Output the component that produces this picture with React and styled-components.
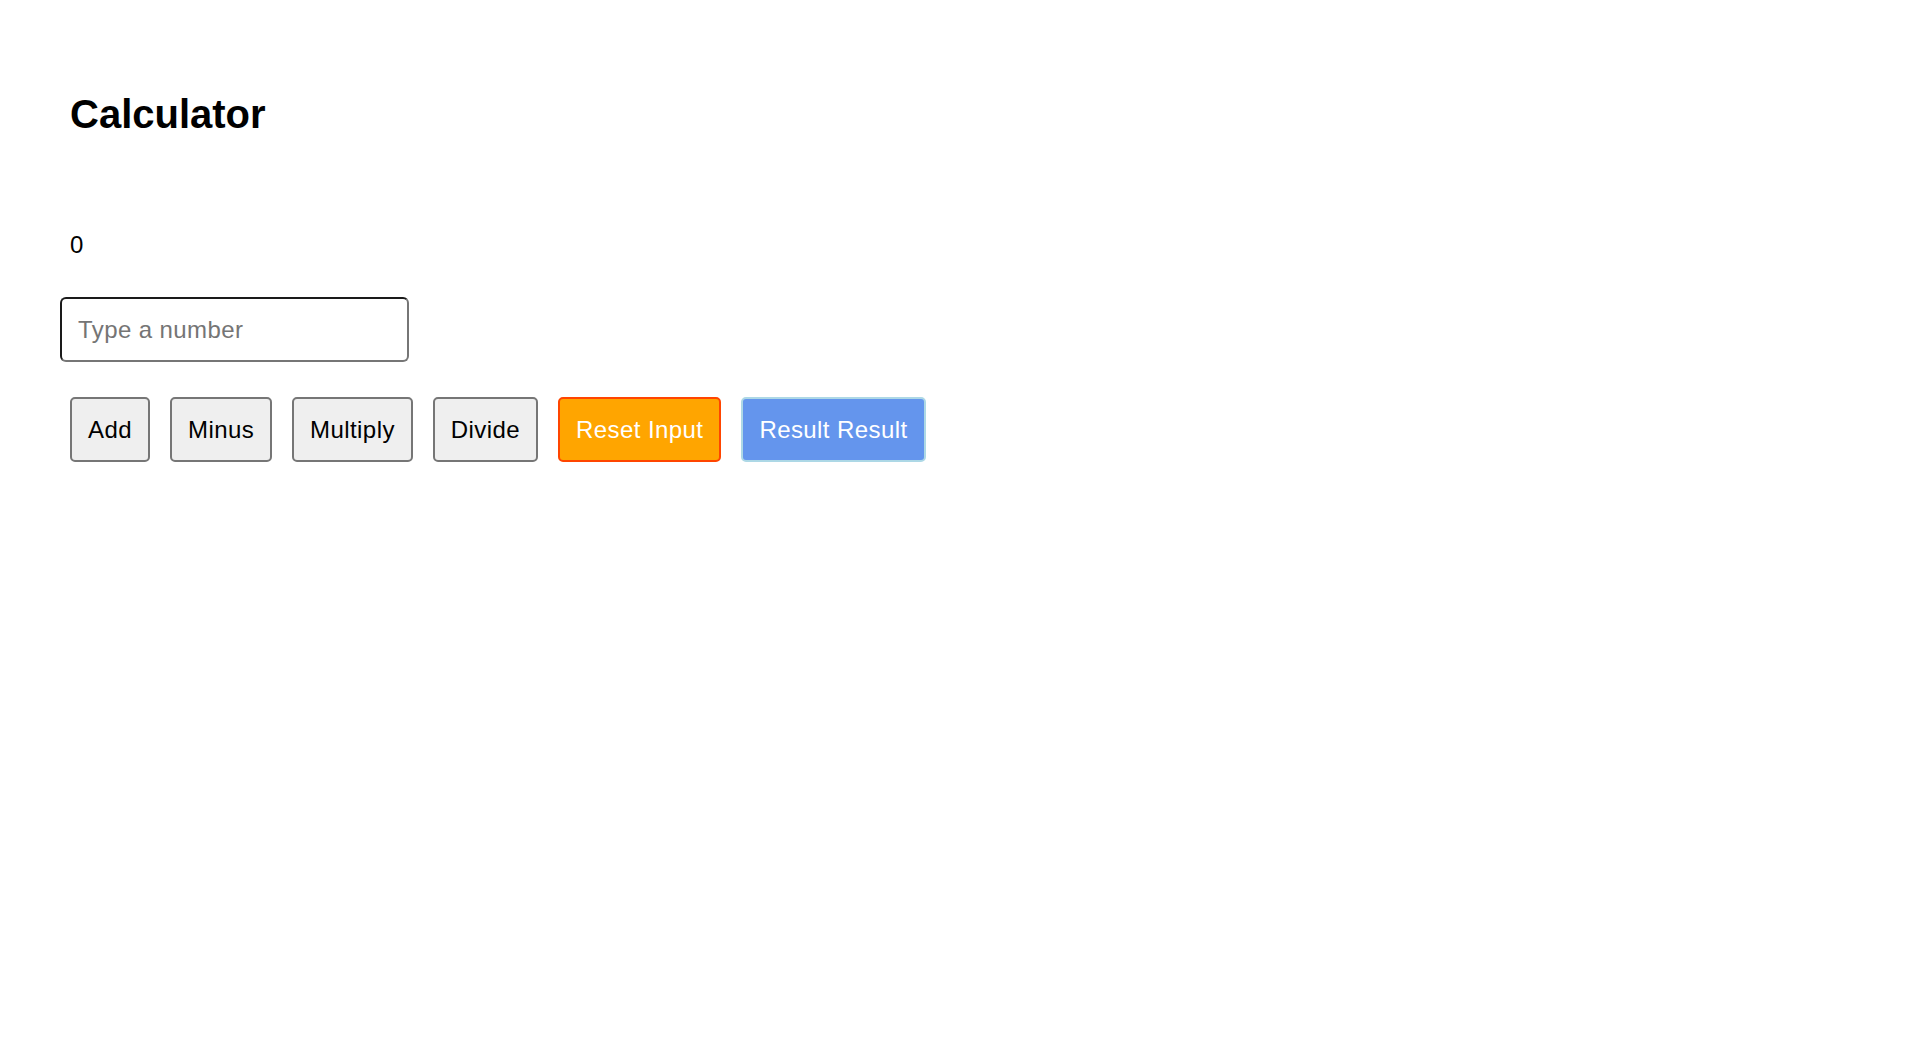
import styled, { createGlobalStyle } from 'styled-components';

const GlobalStyle = createGlobalStyle`
  html, body {
    margin: 0;
    padding: 0;
    background: #fff;
  }

  body {
    font-family: "Liberation Sans", Arial, sans-serif;
    color: #000;
  }
`;

const CalculatorPage = styled.main`
  display: flex;
  flex-direction: column;
  align-items: flex-start;
  padding: 91px 0 0 60px;
`;

const Title = styled.h1`
  margin: 0 0 0 10px;
  font-size: 40px;
  line-height: 46px;
  font-weight: 700;
`;

const ResultValue = styled.p`
  margin: 94px 0 0 10px;
  font-size: 24px;
  line-height: 28px;
`;

const NumberInput = styled.input`
  margin-top: 38px;
  width: 313px;
  height: 29px;
  padding: 16px;
  font-family: "Liberation Sans", Arial, sans-serif;
  font-size: 24px;
  letter-spacing: 0.4px;
  color: #000;
  background: #fff;
  border: 2px solid #767676;
  border-top-color: #1a1a1a;
  border-left-color: #1a1a1a;
  border-radius: 6px;
  outline: none;

  &::placeholder {
    color: #757575;
  }
`;

const ButtonRow = styled.div`
  display: flex;
  gap: 20px;
  margin: 35px 0 0 10px;
`;

const variants = {
  default: { bg: '#efefef', border: '#767676', color: '#000' },
  reset: { bg: '#ffa500', border: '#ff4500', color: '#fff' },
  result: { bg: '#6495ed', border: '#add8e6', color: '#fff' },
};

const CalcButton = styled.button`
  height: 65px;
  padding: 0 16px;
  font-family: "Liberation Sans", Arial, sans-serif;
  font-size: 24px;
  line-height: 29px;
  letter-spacing: 0.42px;
  color: ${({ $variant }) => variants[$variant].color};
  background: ${({ $variant }) => variants[$variant].bg};
  border: 2px solid ${({ $variant }) => variants[$variant].border};
  border-radius: 5px;
  cursor: pointer;
`;

const operations = ['Add', 'Minus', 'Multiply', 'Divide'];

export default function App() {
  return (
    <>
      <GlobalStyle />
      <CalculatorPage>
        <Title>Calculator</Title>
        <ResultValue>0</ResultValue>
        <NumberInput type="number" placeholder="Type a number" />
        <ButtonRow>
          {operations.map((op) => (
            <CalcButton key={op} $variant="default">
              {op}
            </CalcButton>
          ))}
          <CalcButton $variant="reset">Reset Input</CalcButton>
          <CalcButton $variant="result">Result Result</CalcButton>
        </ButtonRow>
      </CalculatorPage>
    </>
  );
}
